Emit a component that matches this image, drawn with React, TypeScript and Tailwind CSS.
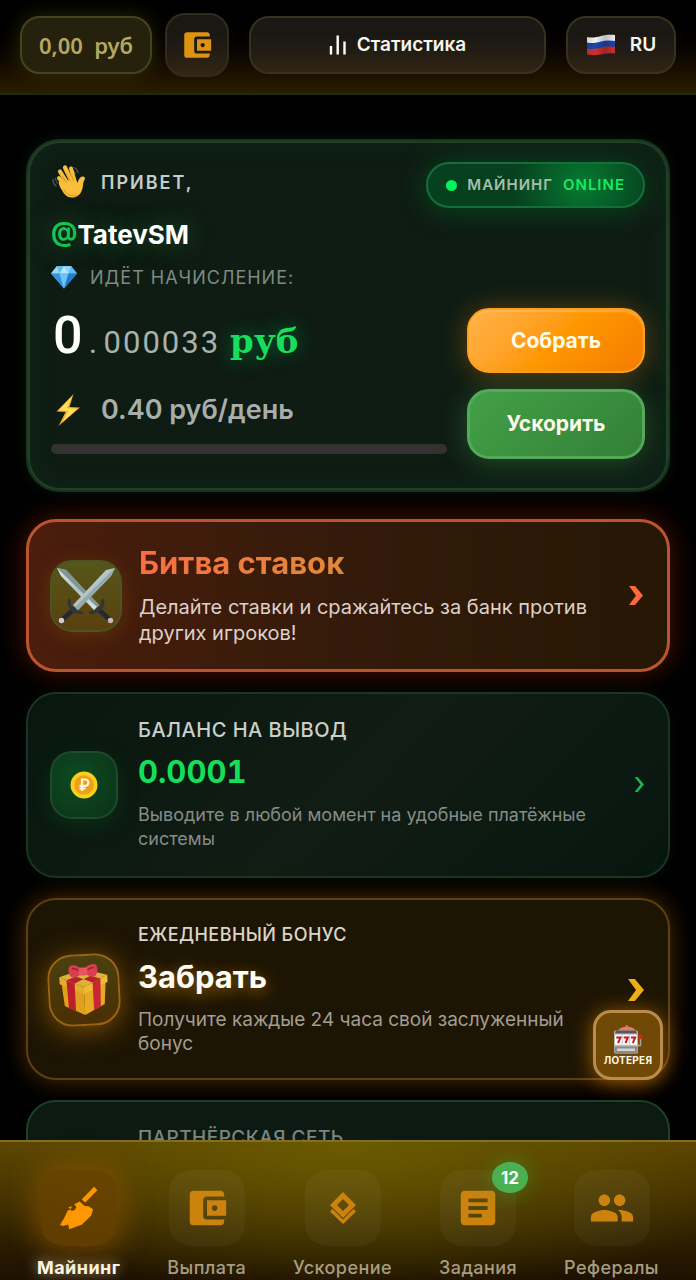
import type { ReactNode } from 'react'
import { MdAccountBalanceWallet, MdArticle, MdPeople } from 'react-icons/md'

/* ---------- Icons ---------- */

function BarsIcon() {
  return (
    <svg width="18" height="20" viewBox="0 0 18 20" fill="none" stroke="#fff" strokeWidth="2.4" aria-hidden="true">
      <path d="M2 11v8.5M8.700 0.500v19M15.500 6.500v13" />
    </svg>
  )
}

function FlagIcon() {
  return (
    <svg width="30" height="22" viewBox="0 0 30 22" aria-hidden="true">
      <defs>
        <linearGradient id="flagShade" x1="0" y1="0" x2="1" y2="0">
          <stop offset="0" stopColor="#000" stopOpacity="0.12" />
          <stop offset="0.3" stopColor="#000" stopOpacity="0" />
          <stop offset="0.65" stopColor="#000" stopOpacity="0.22" />
          <stop offset="1" stopColor="#000" stopOpacity="0.02" />
        </linearGradient>
      </defs>
      <path d="M1 3C6 4 10 3.500 15 2S25 0.500 29 1V8C24 7.500 20 7.500 15 9S6 10.500 1 9.500Z" fill="#f1f1f3" />
      <path d="M1 8.500C6 9.500 10 9 15 7.500S25 6.500 29 7V13.500C24 13 20 13.500 15 15S6 16 1 15Z" fill="#1d46ac" />
      <path d="M1 14.500C6 15.500 10 15 15 13.500S25 12.500 29 13V19.500C24 19 20 19.500 15 20.500S6 21.500 1 20.500Z" fill="#cf3030" />
      <path d="M1 3C6 4 10 3.500 15 2S25 0.500 29 1V19.500C24 19 20 19.500 15 20.500S6 21.500 1 20.500Z" fill="url(#flagShade)" />
    </svg>
  )
}

function WaveIcon() {
  return (
    <svg width="36" height="36" viewBox="0 0 36 36" fill="none" aria-hidden="true">
      <path d="M23 3.500c2 .8 3.500 2.500 4 5M22 6.500c1.200.7 2 1.700 2.300 3M2 15.500c0 3 1 5 3 6.500M4.500 14.500c.2 2 .8 3.300 2 4.500" stroke="#4d5350" strokeWidth="1.300" strokeLinecap="round" />
      <g stroke="#f9bf3b" strokeLinecap="round">
        <path d="M8 14l7 9" strokeWidth="4" />
        <path d="M9 7.500l8 13" strokeWidth="4.200" />
        <path d="M14 3.500l6.500 14" strokeWidth="4.200" />
        <path d="M20 4.500l4 14" strokeWidth="4" />
      </g>
      <path d="M8 17.500L24.500 15.500c1 1.500 1.300 3 2 3.200.7-1.800 1.500-4.700 3.800-6 1.700-.9 3.800.2 3.700 1.700-.2 1.600-1.600 2.300-1.900 6-.5 5.500-2.300 10.300-7 12.300-5 2-9.500.4-12.300-3.500C10 24.500 7 20.500 8 17.500z" fill="#f9bf3b" />
      <path d="M11.500 12.500l4 6M15 9l4 8M20.500 11l2 5.500M13 26c3 5.500 8.500 7.200 13 5" stroke="#de8f1e" strokeWidth="1" strokeLinecap="round" />
    </svg>
  )
}

function GemIcon() {
  return (
    <svg width="26" height="24" viewBox="0 0 26 24" aria-hidden="true">
      <path d="M6 1h14l6 7.500L13 23.500 0 8.500z" fill="#4fb1f0" />
      <path d="M6 1l2.500 7.500H0z" fill="#9adcfb" />
      <path d="M20 1l-2.500 7.500H26z" fill="#62bdf2" />
      <path d="M6 1h7L8.500 8.500z" fill="#65bdf2" />
      <path d="M13 1h7l-2.500 7.500z" fill="#8fd4f9" />
      <path d="M13 1l4.500 7.500h-9z" fill="#b8e9fd" />
      <path d="M0 8.500h8.500L13 23.500z" fill="#3493df" />
      <path d="M8.500 8.500h9L13 23.500z" fill="#6cc2f5" />
      <path d="M17.500 8.500H26L13 23.500z" fill="#237ccd" />
    </svg>
  )
}

function BoltIcon() {
  return (
    <svg width="26" height="32" viewBox="0 0 26 32" aria-hidden="true">
      <path d="M18.500 0L1.500 17.500l9 .5L3.500 32 25 13.500l-10.500-.5z" fill="#f2a51d" />
      <path d="M17 2.500L3.500 16.500l9.500.5-6 11.500L22.500 14.500l-10.500-.2z" fill="#fde05a" />
    </svg>
  )
}

function SwordsIcon() {
  return (
    <svg width="60" height="60" viewBox="0 0 60 60" aria-hidden="true">
      <defs>
        <linearGradient id="blade" x1="0" y1="0" x2="1" y2="1">
          <stop offset="0" stopColor="#dfe8e6" />
          <stop offset="0.5" stopColor="#b0c2c4" />
          <stop offset="1" stopColor="#d8e6e6" />
        </linearGradient>
      </defs>
      <g>
        <path d="M1 2l9 2 33 35-5 5L5 10z" fill="url(#blade)" />
        <path d="M1 2L41 41l2-2L10 4z" fill="#7f9597" />
        <path d="M43 44l10 9" stroke="#262831" strokeWidth="5" strokeLinecap="round" />
        <path d="M46.500 34.500c1.500 6-4 12.500-12 12" fill="none" stroke="#30353b" strokeWidth="3.200" strokeLinecap="round" />
        <circle cx="54.500" cy="54.500" r="2.700" fill="#c5b8bb" />
      </g>
      <g>
        <path d="M59 2l-9 2-33 35 5 5L55 10z" fill="url(#blade)" />
        <path d="M59 2L19 41l3 3L55 10z" fill="#93a9ab" />
        <path d="M17 44L7 53" stroke="#262831" strokeWidth="5" strokeLinecap="round" />
        <path d="M13.500 34.500c-1.500 6 4 12.500 12 12" fill="none" stroke="#30353b" strokeWidth="3.200" strokeLinecap="round" />
        <circle cx="5.500" cy="54.500" r="2.700" fill="#d3c9cb" />
      </g>
    </svg>
  )
}

function CoinIcon() {
  return (
    <svg width="28" height="28" viewBox="0 0 28 28" aria-hidden="true">
      <circle cx="14" cy="14" r="13.500" fill="#f7d117" />
      <circle cx="14" cy="14" r="9.800" fill="#eea01b" />
      <path d="M12 20V8.500h3.200a3.200 3.200 0 0 1 0 6.400H9.500M9.500 17.500h6" fill="none" stroke="#fff6d8" strokeWidth="2.200" />
    </svg>
  )
}

function GiftIcon() {
  return (
    <svg width="50" height="52" viewBox="0 0 50 52" aria-hidden="true">
      <path d="M3 19l22 9v23L5 41z" fill="#e0a01d" />
      <path d="M47 19l-22 9v23l20-10z" fill="#e5ab27" />
      <path d="M1 12l24-7 24 7-24 11z" fill="#dcb23a" />
      <path d="M1 12l24 11v7L1 19z" fill="#e3ac2b" />
      <path d="M49 12L25 23v7l24-11z" fill="#eebb38" />
      <path d="M8 15.500l8 3.500v28l-7-4z" fill="#bb1f2a" />
      <path d="M42 15.500L34 19v28l7-4z" fill="#c92833" />
      <path d="M8 15.300L30 8l7 2-21 9zM42 15.300L20 8l-7 2 21 9z" fill="#b8222c" />
      <path d="M25 6C20 0 12-1 11 3s0 9 3 10 8-2 11-5c3 3 8 6 11 5s4-6 3-10-9-3-14 3z" fill="#d83f50" />
      <path d="M14 4c3 0 6 1.500 8 3.500M36 4c-3 0-6 1.500-8 3.500" stroke="#a81d2c" strokeWidth="1.500" fill="none" />
      <rect x="20.500" y="3.500" width="9" height="8" rx="3" fill="#e65462" />
    </svg>
  )
}

function SlotIcon() {
  return (
    <svg width="30" height="30" viewBox="0 0 30 30" aria-hidden="true">
      <path d="M5 7c1.500-3 5-4 8-4.500V1h1.500v1.500C18 3 21.500 4 23 7z" fill="#dd7f66" />
      <rect x="1" y="6.500" width="24" height="23" rx="1.500" fill="#b9b7b8" />
      <path d="M3 6.500h20l1 3H2z" fill="#5b5458" />
      <rect x="2" y="10.500" width="22" height="10.500" rx="1" fill="#fafafa" />
      <path d="M9.300 10.500v10.500M16.600 10.500v10.500" stroke="#b6b2b2" strokeWidth="0.700" />
      <path d="M3.300 13.500h4.200L5 19M10.700 13.500h4.200L12.500 19M18 13.500h4.200L19.800 19" fill="none" stroke="#c9141d" strokeWidth="1.900" />
      <path d="M1.500 22.500h23v5.500a1.500 1.500 0 0 1-1.500 1.500H3A1.500 1.500 0 0 1 1.500 28z" fill="#8d898c" />
      <path d="M4 24.500h18v2.500H4z" fill="#d7d3d3" />
      <path d="M25 21.500h2.500V14" fill="none" stroke="#a7a2a2" strokeWidth="1.500" />
      <circle cx="27.300" cy="13" r="2.200" fill="#cf2a2a" />
    </svg>
  )
}

function BroomIcon() {
  return (
    <svg width="38" height="44" viewBox="177 297 116 134" fill="#ff9800" aria-hidden="true">
      <path d="M281 299l10 11-37 37-11-9z" />
      <path d="M237 344l15 14 12 1 14 9-6 20-29 27-38 14-3-15-15 5-10-3 12-20 12-25 8-2 4 4 10-4 4-8-4-6-4-2z" />
      <path d="M202 362l12-3-5 9z" />
    </svg>
  )
}

function BoostIcon() {
  return (
    <svg width="28" height="34" viewBox="0 0 28 34" fill="#cb830e" aria-hidden="true">
      <path fillRule="evenodd" d="M14 1l13 13-13 13L1 14zM14 8l-6 6 6 6 6-6z" />
      <path d="M1 20.500l2.500-2.500L14 28.500 24.500 18l2.500 2.500L14 33z" />
    </svg>
  )
}

function Chevron({ className, bold }: { className: string; bold?: boolean }) {
  return (
    <svg className={`${className} shrink-0`} viewBox="0 0 14 20" fill="currentColor" preserveAspectRatio="none" aria-hidden="true">
      {bold ? <path d="M0 0h6l8 10-8 10H0l7-10z" /> : <path d="M1 0h4l9 10-9 10H1l8-10z" />}
    </svg>
  )
}

/* ---------- Header ---------- */

const headerButton =
  'flex h-[58px] items-center justify-center rounded-[20px] border-2 border-[#37311f] bg-[#ffe9b8]/10 text-[19px] font-semibold text-[#f7f4ea]'

function Header() {
  return (
    <header className="flex shrink-0 items-center border-b-2 border-[#1d2b0f] bg-linear-to-b from-black from-10% to-[#2b1d00] px-5 pt-[13px] pb-4">
      <div className="flex h-[58px] w-[132px] items-center justify-center rounded-[20px] border-2 border-[#44451f] bg-[#25210d] font-['Noto_Sans',sans-serif] text-[22px] font-semibold text-[#b5a862] shadow-[0_0_20px_rgba(90,85,15,0.45)]">
        <span className="whitespace-pre">0,00&nbsp; руб</span>
      </div>
      <button type="button" aria-label="Кошелёк" className="ml-[13px] flex size-16 items-center justify-center rounded-[20px] border-2 border-[#302b1e] bg-[#ffe9b8]/10">
        <MdAccountBalanceWallet className="size-[34px] text-[#df930f]" />
      </button>
      <button type="button" className={`${headerButton} ml-5 flex-1 gap-2.5`}>
        <BarsIcon />
        Статистика
      </button>
      <button type="button" className={`${headerButton} ml-5 w-[110px] gap-3.5`}>
        <FlagIcon />
        RU
      </button>
    </header>
  )
}

/* ---------- Cards ---------- */

function MiningCard() {
  return (
    <section className="rounded-[34px] border-2 border-[#1d331d] bg-[#0e1c14] shadow-[0_0_16px_rgba(20,60,30,0.35)]">
      <div className="rounded-[32px] border-2 border-[#1f4227] px-[21px] pt-[19px] pb-[29px] shadow-[inset_0_0_24px_rgba(20,70,35,0.25)]">
        <div className="flex items-start justify-between">
          <div className="flex h-10 items-center gap-3.5">
            <WaveIcon />
            <span className="text-[18px] font-semibold tracking-[2px] text-[#c5cdc8]">ПРИВЕТ,</span>
          </div>
          <div className="flex h-[46px] items-center rounded-full border-2 border-[#13703a] bg-[#06401f] bg-[radial-gradient(circle_at_72%_50%,#067a30,transparent_45%)] px-[18px] text-[15px] font-semibold tracking-[1px] shadow-[0_2px_28px_rgba(0,120,40,0.5)]">
            <span className="mr-2.5 size-[11px] rounded-full bg-[#00f55c]" />
            <span className="mr-2.5 text-[#a5bfae]">МАЙНИНГ</span>
            <span className="text-[#16e963]">ONLINE</span>
          </div>
        </div>
        <div className="flex items-end gap-5">
          <div className="min-w-0 flex-1 pb-[5px]">
            <h1 className="mt-2 text-[26px] leading-[38px] font-bold text-white [text-shadow:0_0_24px_rgba(40,110,50,0.7)]">
              <span className="text-[#17c653]">@</span>TatevSM
            </h1>
            <div className="mt-2 flex h-[30px] items-center gap-[13px] text-[18px] tracking-[1px] text-[#7e8a83]">
              <GemIcon />
              ИДЁТ НАЧИСЛЕНИЕ:
            </div>
            <div className="mt-2 flex h-[72px] items-baseline pl-0.5 font-[Roboto,sans-serif] leading-[72px]">
              <span className="text-[52px] font-medium text-white">0</span>
              <span className="w-[21px] text-center text-[32px] text-[#a9b2ad]">.</span>
              <span className="text-[31px] tracking-[2px] text-[#a9b2ad]">000033</span>
              <span className="ml-2.5 font-['DejaVu_Serif',serif] text-[34px] font-bold text-[#18dd5d] [text-shadow:0_0_20px_rgba(0,150,70,0.7)]">руб</span>
            </div>
            <div className="mt-[18px] flex h-10 items-center gap-5 pl-1 text-[27px] font-semibold text-[#a8aeaa]">
              <BoltIcon />
              0.40 руб/день
            </div>
            <div role="progressbar" aria-label="Прогресс" aria-valuenow={0} className="mt-3.5 h-2.5 rounded-full bg-[#333131]" />
          </div>
          <div className="flex w-[178px] flex-col gap-4 text-[21px] font-bold text-[#fffbe9] [text-shadow:0_2px_3px_rgba(0,0,0,0.35)]">
            <button type="button" className="h-[65px] rounded-[22px] border-2 border-[#ff9f1f] bg-linear-135 from-[#ffb347] via-[#ff9800] to-[#f57c00] shadow-[0_2px_28px_rgba(255,140,0,0.35),inset_0_2px_2px_rgba(255,200,110,0.5)]">
              Собрать
            </button>
            <button type="button" className="h-[70px] rounded-[22px] border-[3px] border-[#54aa58] bg-linear-135 from-[#43a047] to-[#338037] shadow-[0_4px_28px_rgba(76,175,80,0.35)]">
              Ускорить
            </button>
          </div>
        </div>
      </div>
    </section>
  )
}

function BattleCard() {
  return (
    <a href="#battle" className="mt-[27px] flex items-center gap-[17px] rounded-[30px] border-[3px] border-[#bb5530] bg-linear-to-r from-[#4b1d0c] via-[#341a0a] to-[#261704] py-[23px] pr-6 pl-[21px] shadow-[0_0_28px_rgba(200,50,10,0.4)]">
      <div className="flex size-[72px] shrink-0 items-center justify-center rounded-[22px] border-2 border-[#4c5425] bg-linear-to-b from-[#55561a] to-[#5a400d] shadow-[0_4px_20px_rgba(130,80,10,0.4)]">
        <SwordsIcon />
      </div>
      <div className="min-w-0 flex-1">
        <h2 className="text-[31px] leading-9 font-bold">
          <span className="bg-linear-to-r from-[#fb6d40] to-[#e0893a] bg-clip-text text-transparent">Битва ставок</span>
        </h2>
        <p className="mt-[13px] text-[20px] leading-[26px] text-[#ddd0c9]">Делайте ставки и сражайтесь за банк против других игроков!</p>
      </div>
      <Chevron className="h-[19px] w-3.5 text-[#fc693a]" bold />
    </a>
  )
}

type InfoCardProps = {
  href: string
  className: string
  icon: ReactNode
  label: string
  labelClass: string
  value?: ReactNode
  text?: string
  textClass?: string
  arrow?: ReactNode
}

function InfoCard({ href, className, icon, label, labelClass, value, text, textClass, arrow }: InfoCardProps) {
  return (
    <a href={href} className={`mt-5 flex gap-5 rounded-[30px] border-2 pr-6 pl-[22px] ${className}`}>
      {icon}
      <div className="min-w-0 flex-1">
        <div className={`leading-6 font-medium ${labelClass}`}>{label}</div>
        {value && <div className="mt-3 text-[31px] leading-9 font-bold">{value}</div>}
        {text && <p className={`mt-[13px] leading-6 ${textClass}`}>{text}</p>}
      </div>
      {arrow}
    </a>
  )
}

/* ---------- Bottom navigation ---------- */

const navItems = [
  { label: 'Майнинг', href: '#mining', icon: <BroomIcon />, active: true },
  { label: 'Выплата', href: '#payout', icon: <MdAccountBalanceWallet className="size-[46px]" /> },
  { label: 'Ускорение', href: '#boost', icon: <BoostIcon /> },
  { label: 'Задания', href: '#tasks', icon: <MdArticle className="size-[46px]" />, badge: 12 },
  { label: 'Рефералы', href: '#referrals', icon: <MdPeople className="size-[46px]" /> },
]

function BottomNav() {
  return (
    <nav className="flex h-[140px] shrink-0 justify-between border-t-2 border-[#82701d] bg-[radial-gradient(ellipse_65%_110%_at_50%_0%,rgba(108,92,0,0.95),transparent),linear-gradient(to_bottom,#573f00,#1d1100)] px-[37px] pt-7">
      {navItems.map((item) => (
        <a
          key={item.label}
          href={item.href}
          className={`flex flex-col items-center text-[18px] leading-6 tracking-wide ${item.active ? 'font-bold text-[#fffbe9] [text-shadow:0_0_14px_rgba(255,240,200,0.7)]' : 'font-medium text-[#a79d80]'}`}
        >
          <span
            className={`relative mb-2.5 flex size-[76px] shrink-0 items-center justify-center rounded-[22px] text-[#cb830e] ${item.active ? 'bg-[#6b4300]/80 shadow-[0_0_24px_8px_rgba(140,85,0,0.55)]' : 'bg-white/4'}`}
          >
            {item.icon}
            {item.badge && (
              <span className="absolute -top-2 -right-3 flex h-[31px] w-9 items-center justify-center rounded-[50%] bg-[#4bb04f] text-[17px] font-bold tracking-normal text-white shadow-[0_0_20px_rgba(60,170,60,0.5)]">
                {item.badge}
              </span>
            )}
          </span>
          {item.label}
        </a>
      ))}
    </nav>
  )
}

export default function App() {
  return (
    <div className="flex h-screen flex-col bg-black font-[Inter,sans-serif]">
      <Header />
      <div className="relative min-h-0 flex-1">
        <main className="h-full overflow-y-auto px-[26px] pt-11 [scrollbar-width:none]">
          <MiningCard />
          <BattleCard />
          <InfoCard
            href="#balance"
            className="items-center border-[#1c3423] bg-linear-135 from-[#07170f] via-[#111c14] to-[#06170f] pt-6 pb-[25px] shadow-[0_0_20px_rgba(10,30,18,0.4)]"
            icon={
              <div className="flex size-[68px] shrink-0 items-center justify-center rounded-[22px] border-2 border-[#1f4a2d] bg-[radial-gradient(circle_at_40%_40%,#0e4a20,#0a3218)] shadow-[0_6px_20px_rgba(10,70,30,0.45)]">
                <CoinIcon />
              </div>
            }
            label="БАЛАНС НА ВЫВОД"
            labelClass="text-[20px] tracking-wide text-[#c9cfca]"
            value={<span className="tabular-nums text-[#14df5b]">0.0001</span>}
            text="Выводите в любой момент на удобные платёжные системы"
            textClass="text-[18px] text-[#858c87]"
            arrow={<Chevron className="h-[15px] w-2.5 text-[#18b853]" />}
          />
          <InfoCard
            href="#bonus"
            className="items-center border-[#5c400f] bg-[#1d1504] pt-[23px] pb-[22px] shadow-[0_0_24px_rgba(200,110,0,0.4)]"
            icon={
              <div className="-mx-0.5 flex size-[72px] shrink-0 -rotate-3 items-center justify-center rounded-[24px] border-2 border-[#9a6414] bg-linear-to-b from-[#4a4010] to-[#4a2f04] shadow-[0_4px_28px_rgba(190,120,0,0.6)]">
                <GiftIcon />
              </div>
            }
            label="ЕЖЕДНЕВНЫЙ БОНУС"
            labelClass="text-[18px] tracking-wide text-[#dcd5c8]"
            value={<span className="text-[#fffdf6] [text-shadow:0_4px_16px_rgba(255,170,0,0.55)]">Забрать</span>}
            text="Получите каждые 24 часа свой заслуженный бонус"
            textClass="text-[19px] text-[#a39d92]"
            arrow={<Chevron className="h-[22px] w-4 text-[#efad18]" bold />}
          />
          <InfoCard
            href="#partners"
            className="items-start border-[#1c3f2a] bg-[#0c1a13] py-6"
            icon={<div className="mt-14 size-[68px] shrink-0 rounded-[22px] bg-[#0a3218]" />}
            label="ПАРТНЁРСКАЯ СЕТЬ"
            labelClass="text-[19px] tracking-wide text-[#7d8580]"
          />
        </main>
        <button
          type="button"
          className="absolute right-[33px] bottom-[60px] flex size-[70px] flex-col items-center justify-center rounded-[18px] border-[3px] border-[#b98c4c] bg-[#704906] text-[10px] leading-3 font-bold tracking-wide text-[#fff8e2] shadow-[0_2px_20px_rgba(255,150,0,0.55)]"
        >
          <SlotIcon />
          ЛОТЕРЕЯ
        </button>
      </div>
      <BottomNav />
    </div>
  )
}
